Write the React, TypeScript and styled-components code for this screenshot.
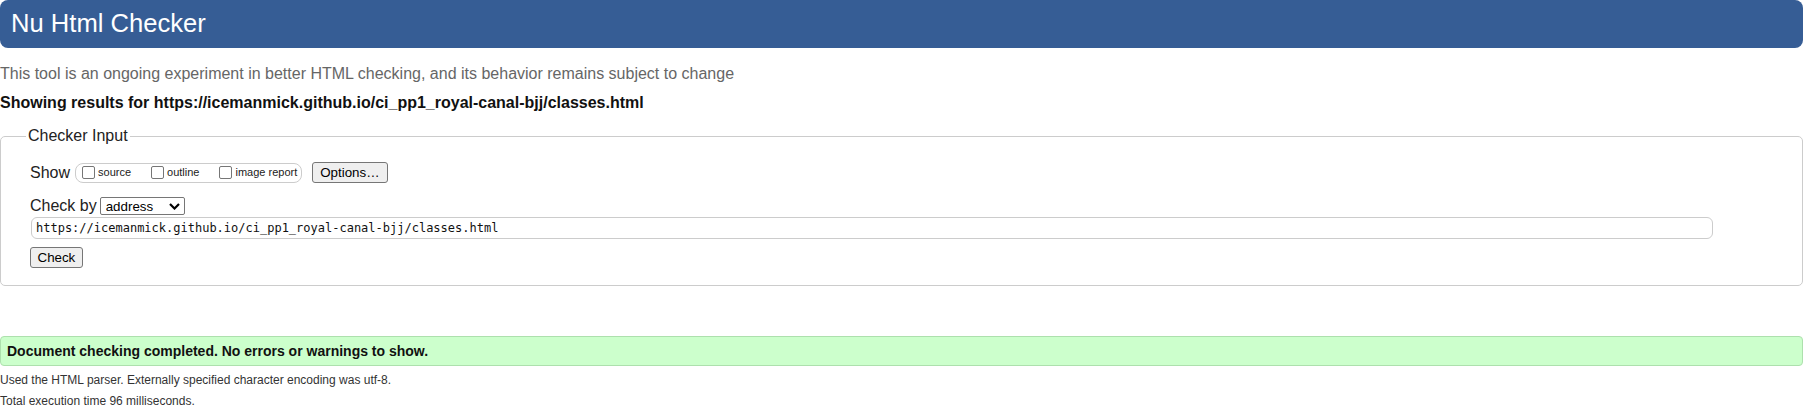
import React from "react";
import styled, { createGlobalStyle } from "styled-components";

const Global = createGlobalStyle`
  html, body { margin: 0; padding: 0; background: #fff; }
  body { font-family: "Liberation Sans", Arial, sans-serif; color: #222; }
  * { box-sizing: border-box; }
`;

const Page = styled.div`
  width: 1803px;
`;

const Header = styled.h1`
  margin: 0;
  height: 48px;
  padding: 0 0 0 11px;
  background: #365d95;
  color: #fff;
  border-radius: 8px;
  font-size: 25.6px;
  font-weight: normal;
  line-height: 46px;
`;

const Intro = styled.p`
  margin: 17px 0 0;
  font-size: 16px;
  line-height: 18px;
  color: #666;
`;

const Results = styled.h2`
  margin: 11px 0 0;
  font-size: 16px;
  font-weight: bold;
  line-height: 18px;
  color: #111;
`;

const Fieldset = styled.fieldset`
  margin: 15px 0 0;
  padding: 17px 29px 17px 29px;
  border: 1px solid #ccc;
  border-radius: 5px;
  min-width: 0;
`;

const Legend = styled.legend`
  margin-left: -4px;
  padding: 0 2px;
  font-size: 16px;
  line-height: 18px;
  color: #222;
`;

const Row = styled.div<{ $h: number; $mt?: number }>`
  display: flex;
  align-items: center;
  height: ${(p) => p.$h}px;
  margin-top: ${(p) => p.$mt ?? 0}px;
`;

const Label = styled.span`
  font-size: 16px;
  line-height: 18px;
  color: #222;
`;

const Pill = styled.div`
  display: inline-flex;
  align-items: center;
  height: 20px;
  margin-left: 5px;
  padding: 0 4px 0 6px;
  border: 1px solid #ccc;
  border-radius: 8px;
`;

const Option = styled.label<{ $last?: boolean }>`
  display: inline-flex;
  align-items: center;
  gap: 3px;
  margin-right: ${(p) => (p.$last ? 0 : 20)}px;
  font-size: 11px;
  line-height: 13px;
  color: #222;
`;

const Box = styled.input`
  appearance: none;
  margin: 0;
  width: 13px;
  height: 13px;
  border: 1px solid #767676;
  border-radius: 2px;
  background: #fff;
`;

const Button = styled.button<{ $h: number; $px: number; $ml?: number }>`
  height: ${(p) => p.$h}px;
  margin: 0 0 0 ${(p) => p.$ml ?? 0}px;
  padding: 0 ${(p) => p.$px}px;
  border: 1px solid #767676;
  border-radius: 3px;
  background: #efefef;
  color: #000;
  font-family: "Liberation Sans", Arial, sans-serif;
  font-size: 13.33px;
  line-height: 15px;
`;

const Select = styled.div`
  display: flex;
  align-items: center;
  justify-content: space-between;
  width: 85px;
  height: 18px;
  margin-left: 3px;
  padding: 0 4px 0 5px;
  border: 1px solid #767676;
  border-radius: 2px;
  background: #fff;
  font-size: 13.33px;
  line-height: 15px;
  color: #000;
`;

const UrlInput = styled.div`
  display: flex;
  align-items: center;
  height: 22px;
  width: 1682px;
  margin: 2px 0 0 1px;
  padding: 0 4px;
  border: 1px solid #ccc;
  border-radius: 6px;
  font-family: "DejaVu Sans Mono", "Liberation Mono", monospace;
  font-size: 12px;
  color: #111;
`;

const CheckRow = styled.div`
  margin-top: 8px;
  display: flex;
`;

const Success = styled.div`
  margin-top: 50px;
  padding: 6px 6px;
  border: 1px solid #ade0ad;
  border-radius: 4px;
  background: #ccffcc;
  font-size: 14px;
  font-weight: bold;
  line-height: 16px;
  color: #111;
`;

const Info = styled.p`
  margin: 7px 0 0;
  font-size: 12px;
  line-height: 14px;
  color: #333;
`;

const Chevron = () => (
  <svg width="11" height="7" viewBox="0 0 11 7">
    <polyline points="1,1 5.5,5.5 10,1" fill="none" stroke="#000" strokeWidth="2.2" />
  </svg>
);

export default function App() {
  return (
    <Page>
      <Global />
      <Header>Nu Html Checker</Header>
      <Intro>This tool is an ongoing experiment in better HTML checking, and its behavior remains subject to change</Intro>
      <Results>Showing results for https://icemanmick.github.io/ci_pp1_royal-canal-bjj/classes.html</Results>
      <Fieldset>
        <Legend>Checker Input</Legend>
        <Row $h={21}>
          <Label>Show</Label>
          <Pill>
            <Option><Box type="checkbox" />source</Option>
            <Option><Box type="checkbox" />outline</Option>
            <Option $last><Box type="checkbox" />image report</Option>
          </Pill>
          <Button $h={21} $px={7} $ml={10}>Options…</Button>
        </Row>
        <Row $h={18} $mt={14}>
          <Label>Check by</Label>
          <Select>
            <span>address</span>
            <Chevron />
          </Select>
        </Row>
        <UrlInput>https://icemanmick.github.io/ci_pp1_royal-canal-bjj/classes.html</UrlInput>
        <CheckRow>
          <Button $h={21} $px={6.5}>Check</Button>
        </CheckRow>
      </Fieldset>
      <Success>Document checking completed. No errors or warnings to show.</Success>
      <Info>Used the HTML parser. Externally specified character encoding was utf-8.</Info>
      <Info>Total execution time 96 milliseconds.</Info>
    </Page>
  );
}
